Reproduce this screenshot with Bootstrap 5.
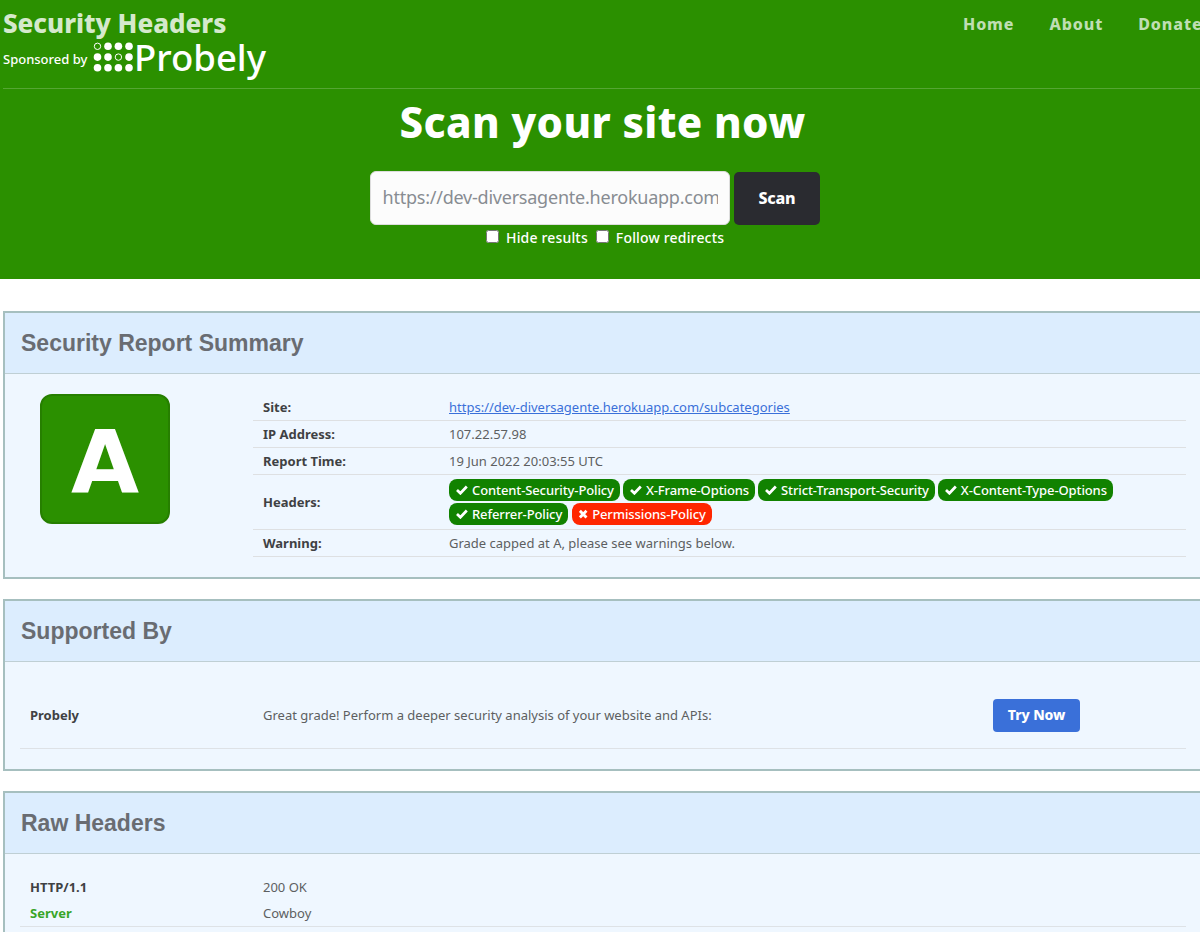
<!DOCTYPE html>
<html lang="en">
<head>
<meta charset="utf-8">
<title>Security Headers</title>
<link href="https://cdn.jsdelivr.net/npm/bootstrap@5.3.0/dist/css/bootstrap.min.css" rel="stylesheet">
<style>
html, body { overflow: hidden; height: 932px; }
body { font-family: "Noto Sans", sans-serif; font-size: 13px; line-height: 20px; color: #5d5f61; background: #fff; }
.hero { background: #2b9000; height: 279px; color: #fff; }
.topbar { height: 89px; margin-left: 3px; border-bottom: 1px solid #55a633; }
.brand { font-size: 26px; line-height: 30px; font-weight: 800; color: #d5e9cc; letter-spacing: -.03px; padding-top: 8px; width: 300px; height: 39px; }
.sponsor { font-size: 13px; font-weight: 500; height: 40px; }
.sponsor span { line-height: 40px; width: 91px; }
.sponsor svg { overflow: visible; }
.topnav { padding-top: 12px; margin-left: 660px; gap: 35px; }
.topnav a { color: #bfdeb3; font-weight: 800; font-size: 16px; line-height: 24px; letter-spacing: .9px; text-decoration: none; }
.title { font-size: 42px; font-weight: 800; letter-spacing: .4px; line-height: 50px; margin: 8px 0 24px; padding-left: 5px; }
.scanrow { padding-left: 370px; gap: 4px; }
.urlbox { width: 360px; height: 54px; border: 1px solid #ddd; border-radius: 6px; background: #fcfcfc; font-size: 18px; letter-spacing: -.23px; padding: 0 11px 2px 11.5px; color: #888c92; }
.urlbox::placeholder { color: #888c92; opacity: 1; }
.scanbtn { width: 86px; height: 53px; margin-top: 1px; background: #2a2b30; color: #fff; font-weight: 800; font-size: 16px; letter-spacing: -.2px; border-radius: 5px; padding: 0 0 2px; }
.opts { font-size: 14px; font-weight: 500; letter-spacing: .17px; padding: 3px 0 0 486px; }
.opts input { width: 13px; height: 13px; margin: 0 7px 3px 0; }
.report { border: 2px solid #a6bfbf; border-radius: 0; margin-left: 3px; margin-bottom: 20px; width: 1204px; background: #eff7ff; color: inherit; }
.report-title { background: #dcedfe; border-bottom: 1px solid #bfcfd4; height: 61px; font: 700 23px/60px "Liberation Sans", sans-serif; color: #696c72; padding-left: 16px; }
.grade { width: 130px; height: 130px; margin: 20px 83px 0 35px; padding-top: 7px; border: 2px solid #267f00; border-radius: 12px; background: #2b9000; color: #fff; font: 700 88px/119px "DejaVu Sans", sans-serif; }
.facts { width: 933px; margin-top: 20px; }
.fact { border-bottom: 1px solid #dee0e2; height: 27px; padding-left: 10px; }
.fact b { width: 186px; color: #3f4143; flex: none; }
.fact a { color: #3a70d9; }
.pillrow { gap: 3px; }
.pill { display: inline-flex; align-items: center; height: 22px; border-radius: 8px; background: #118200; color: #fff; font-weight: 500; letter-spacing: -.11px; padding: 0 6px 0 7px; gap: 4px; white-space: nowrap; }
.pill.bad { background: #ff2600; margin-left: 1px; }
.pill svg { width: 12px; height: 10px; flex: none; }
.pill.bad svg { width: 9px; }
.line { margin-left: 15px; width: 1166px; padding-left: 10px; }
.line b { width: 233px; color: #3f4143; flex: none; }
.trybtn { width: 87px; height: 33px; background: #3a70d9; color: #fff; font-size: 14px; font-weight: 800; letter-spacing: -.1px; border-radius: 4px; padding: 0 0 2px; }
</style>
</head>
<body>
<header class="hero">
  <div class="topbar d-flex">
    <div>
      <div class="brand">Security Headers</div>
      <div class="sponsor d-flex">
        <span>Sponsored by</span>
        <svg width="174" height="42" viewBox="0 0 174 42" fill="#fff">
          <g fill="none" stroke="#fff"><circle cx="3.5" cy="7.3" r="3.2"/><circle cx="24.4" cy="18.1" r="3.2"/></g>
          <circle cx="14" cy="7.3" r="3.8"/><circle cx="24.4" cy="7.3" r="3.8"/><circle cx="35" cy="7.3" r="3.8"/>
          <circle cx="3.5" cy="18.1" r="3.8"/><circle cx="14" cy="18.1" r="3.8"/><circle cx="35" cy="18.1" r="3.8"/>
          <circle cx="3.5" cy="28.8" r="3.8"/><circle cx="14" cy="28.8" r="3.8"/><circle cx="24.4" cy="28.8" r="3.8"/><circle cx="35" cy="28.8" r="3.8"/>
          <text x="40" y="32" font-family="Noto Sans" font-size="37" font-weight="500" textLength="132" lengthAdjust="spacingAndGlyphs">Probely</text>
        </svg>
      </div>
    </div>
    <nav class="topnav d-flex align-items-start"><a href="#">Home</a><a href="#">About</a><a href="#">Donate</a></nav>
  </div>
  <h1 class="title text-center">Scan your site now</h1>
  <div class="scanrow d-flex">
    <input class="urlbox" type="text" placeholder="https://dev-diversagente.herokuapp.com/subcategories">
    <button class="btn scanbtn">Scan</button>
  </div>
  <div class="opts d-flex align-items-center"><input type="checkbox"><span class="me-2">Hide results</span><input type="checkbox"><span>Follow redirects</span></div>
</header>
<main class="pt-3">
  <section class="card report mt-3" style="height:268px">
    <h2 class="report-title m-0">Security Report Summary</h2>
    <div class="d-flex">
      <div class="grade d-flex align-items-center justify-content-center"><span>A</span></div>
      <div class="facts">
        <div class="fact d-flex align-items-center"><b>Site:</b><a href="#">https://dev-diversagente.herokuapp.com/subcategories</a></div>
        <div class="fact d-flex align-items-center"><b>IP Address:</b><span>107.22.57.98</span></div>
        <div class="fact d-flex align-items-center"><b>Report Time:</b><span>19 Jun 2022 20:03:55 UTC</span></div>
        <div class="fact d-flex align-items-center" style="height:55px"><b>Headers:</b>
          <div>
            <div class="d-flex pillrow" style="margin-bottom:2px">
              <span class="pill"><svg viewBox="0 0 12 10"><path d="M1 5 4.4 8.3 10.8 1.5" fill="none" stroke="#fff" stroke-width="2.7"/></svg>Content-Security-Policy</span>
              <span class="pill"><svg viewBox="0 0 12 10"><path d="M1 5 4.4 8.3 10.8 1.5" fill="none" stroke="#fff" stroke-width="2.7"/></svg>X-Frame-Options</span>
              <span class="pill"><svg viewBox="0 0 12 10"><path d="M1 5 4.4 8.3 10.8 1.5" fill="none" stroke="#fff" stroke-width="2.7"/></svg>Strict-Transport-Security</span>
              <span class="pill"><svg viewBox="0 0 12 10"><path d="M1 5 4.4 8.3 10.8 1.5" fill="none" stroke="#fff" stroke-width="2.7"/></svg>X-Content-Type-Options</span>
            </div>
            <div class="d-flex pillrow">
              <span class="pill"><svg viewBox="0 0 12 10"><path d="M1 5 4.4 8.3 10.8 1.5" fill="none" stroke="#fff" stroke-width="2.7"/></svg>Referrer-Policy</span>
              <span class="pill bad"><svg viewBox="0 0 9 10"><path d="M.9 1.8 7.5 8.4M7.5 1.8 .9 8.4" fill="none" stroke="#fff" stroke-width="2.8"/></svg>Permissions-Policy</span>
            </div>
          </div>
        </div>
        <div class="fact d-flex align-items-center"><b>Warning:</b><span>Grade capped at A, please see warnings below.</span></div>
      </div>
    </div>
  </section>
  <section class="card report" style="height:172px">
    <h2 class="report-title m-0">Supported By</h2>
    <div class="line d-flex align-items-center border-bottom" style="height:87px;padding-top:20px"><b>Probely</b><span style="width:730px">Great grade! Perform a deeper security analysis of your website and APIs:</span><button class="btn trybtn">Try Now</button></div>
  </section>
  <section class="card report mb-0 border-bottom-0" style="height:141px">
    <h2 class="report-title m-0">Raw Headers</h2>
    <div class="line d-flex align-items-center" style="height:26px;margin-top:20px"><b>HTTP/1.1</b><span>200 OK</span></div>
    <div class="line d-flex align-items-center border-bottom" style="height:27px"><b style="color:#38a528">Server</b><span>Cowboy</span></div>
  </section>
</main>
<script src="https://cdn.jsdelivr.net/npm/bootstrap@5.3.0/dist/js/bootstrap.bundle.min.js"></script>
</body>
</html>
